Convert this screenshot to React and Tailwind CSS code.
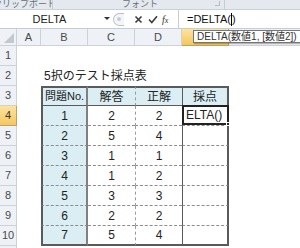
import React from 'react';

const FONT = { fontFamily: '"Liberation Sans", "Noto Sans CJK JP", sans-serif' };

// 表のデータ: [問題No, 解答, 正解]
const rows = [
  ['1', '2', '2'],
  ['2', '5', '4'],
  ['3', '1', '1'],
  ['4', '1', '2'],
  ['5', '3', '3'],
  ['6', '2', '2'],
  ['7', '5', '4'],
];

const RowHead = ({ n, active }) => (
  <div
    className={`w-[17px] shrink-0 flex items-center justify-center text-[11px] border-r border-b ${
      active
        ? 'bg-gradient-to-b from-[#fbe4a0] to-[#f6c65c] text-[#3a3a3a] border-[#c8a24a]'
        : 'bg-[#eef1f5] text-[#4a4a4a] border-[#cdd2d9]'
    }`}
  >
    {n}
  </div>
);

const App = () => {
  return (
    <div className="relative w-[300px] h-[248px] overflow-hidden bg-white text-[#222]" style={FONT}>
      {/* リボン下端 */}
      <div className="h-[10px] flex bg-[#e4e9ef] text-[9px] leading-[8px] text-[#6b6f75] overflow-hidden border-b border-[#c9d0d9]">
        <div className="w-[53px] shrink-0 flex items-start border-r border-[#c6ccd4] overflow-hidden">
          <span className="-ml-[7px] whitespace-nowrap">クリップボード</span>
          <span className="ml-[3px] mt-[1px] w-[5px] h-[5px] border-r border-b border-[#9aa0a8]" />
        </div>
        <div className="w-[172px] shrink-0 relative border-r border-[#c6ccd4]">
          <span className="absolute left-[69px] top-0 whitespace-nowrap">フォント</span>
          <span className="absolute right-[4px] top-[1px] w-[5px] h-[5px] border-r border-b border-[#b8bdc4]" />
        </div>
        <div className="flex-1" />
      </div>

      {/* 数式バー */}
      <div className="h-[19px] flex items-center bg-white border-b border-[#c5ccd6]">
        <div className="w-[113px] h-full shrink-0 relative flex items-center justify-center text-[11px] text-[#222]">
          <span className="-ml-[14px]">DELTA</span>
          <span className="absolute right-[3px] top-[7px] w-0 h-0 border-l-[3px] border-r-[3px] border-t-[3px] border-l-transparent border-r-transparent border-t-[#333]" />
        </div>
        <div className="w-[11px] h-[13px] shrink-0 rounded-l-full border border-r-0 border-[#b9c0c9] bg-[#f3f5f8] flex items-center justify-center">
          <span className="w-[4px] h-[4px] rounded-full bg-[#c7ccd3]" />
        </div>
        <div className="w-[54px] h-full shrink-0 flex items-center text-[#333]">
          <svg width="9" height="9" viewBox="0 0 9 9" className="ml-[10px]">
            <path d="M1.5 1.5 L7.5 7.5 M7.5 1.5 L1.5 7.5" stroke="#3c3c3c" strokeWidth="1.6" />
          </svg>
          <svg width="10" height="9" viewBox="0 0 10 9" className="ml-[5px]">
            <path d="M1 4.5 L3.8 7.5 L9 1.2" stroke="#3c3c3c" strokeWidth="1.6" fill="none" />
          </svg>
          <span className="ml-[4px] text-[10px] italic text-[#333]" style={{ fontFamily: '"Liberation Serif", serif' }}>
            f<span className="text-[8px]">x</span>
          </span>
        </div>
        <div className="flex-1 h-full border-l border-[#c5ccd6] flex items-center pl-[8px] text-[11px] text-[#111]">
          <span>=DELTA(</span>
          <span className="w-px h-[13px] bg-black" />
          <span>)</span>
        </div>
      </div>

      {/* 列見出し */}
      <div className="h-[17px] flex text-[11px] text-[#4a4a4a]">
        <div className="w-[17px] shrink-0 bg-[#eef1f5] border-r border-b border-[#cdd2d9] relative">
          <svg width="10" height="10" viewBox="0 0 10 10" className="absolute right-[2px] bottom-[2px]">
            <path d="M10 0 L10 10 L0 10 Z" fill="#c3c8cf" />
          </svg>
        </div>
        {['A', 'B', 'C', 'D'].map((c) => (
          <div
            key={c}
            className={`${c === 'A' ? 'w-[24px]' : 'w-[47px]'} shrink-0 bg-[#eef1f5] border-r border-b border-[#cdd2d9] flex items-center justify-center`}
          >
            {c}
          </div>
        ))}
        <div className="w-[47px] shrink-0 bg-gradient-to-b from-[#fbe4a0] to-[#f6c65c] border-r border-b border-[#c8a24a] flex items-center justify-center">
          E
        </div>
        <div className="flex-1 bg-[#eef1f5] border-b border-[#cdd2d9]" />
      </div>

      {/* 1行目 */}
      <div className="h-[20px] flex">
        <RowHead n="1" />
        <div className="flex-1" />
      </div>

      {/* 2行目: タイトル */}
      <div className="h-[20px] flex">
        <RowHead n="2" />
        <div className="w-[24px] shrink-0" />
        <div className="flex-1 flex items-center pl-[3px] text-[12px] text-[#222]">5択のテスト採点表</div>
      </div>

      {/* 3行目: 表の見出し */}
      <div className="h-[20px] flex text-[12px] text-[#222]">
        <RowHead n="3" />
        <div className="w-[24px] shrink-0" />
        <div className="w-[47px] shrink-0 bg-[#dbeef3] border-l-2 border-t-2 border-b border-r-2 border-[#5a5a5a] border-r-[#808080] flex items-center justify-center text-[11px]">
          問題No.
        </div>
        <div className="w-[47px] shrink-0 bg-[#dbeef3] border-t-2 border-b border-[#5a5a5a] flex items-center justify-center">
          解答
        </div>
        <div className="w-[47px] shrink-0 bg-[#dbeef3] border-t-2 border-b border-l border-[#5a5a5a] border-l-[#9a9a9a] [border-left-style:dashed] flex items-center justify-center">
          正解
        </div>
        <div className="w-[47px] shrink-0 bg-[#dbeef3] border-t-2 border-b border-l border-r-2 border-[#5a5a5a] flex items-center justify-center">
          採点
        </div>
        <div className="flex-1" />
      </div>

      {/* データ行 */}
      {rows.map((r, i) => {
        const last = i === rows.length - 1;
        const bottom = last
          ? 'border-b-2 border-b-[#5a5a5a]'
          : 'border-b border-b-[#8c8c8c] [border-bottom-style:dashed]';
        return (
          <div key={i} className="h-[20px] flex text-[12px] text-[#222]">
            <RowHead n={String(i + 4)} active={i === 0} />
            <div className="w-[24px] shrink-0" />
            <div className={`w-[47px] shrink-0 bg-[#dbeef3] border-l-2 border-l-[#5a5a5a] border-r-2 border-r-[#808080] ${bottom} flex items-center justify-center`}>
              {r[0]}
            </div>
            <div className={`w-[47px] shrink-0 ${bottom} flex items-center justify-center`}>{r[1]}</div>
            <div className={`w-[47px] shrink-0 border-l border-l-[#9a9a9a] [border-left-style:dashed] ${bottom} flex items-center justify-center`}>
              {r[2]}
            </div>
            <div className={`w-[47px] shrink-0 relative border-l border-l-[#5a5a5a] border-r-2 border-r-[#5a5a5a] ${bottom}`}>
              {i === 0 && (
                <div className="absolute -left-px -top-px -right-[2px] bottom-0 border-2 border-[#222] flex items-center pl-[2px] text-[12px]">
                  ELTA()
                  <span className="absolute -right-[3px] -bottom-[3px] w-[4px] h-[4px] bg-[#222] border border-white" />
                </div>
              )}
            </div>
            <div className="flex-1" />
          </div>
        );
      })}

      {/* 11行目 */}
      <div className="h-[20px] flex">
        <RowHead n="11" />
        <div className="flex-1" />
      </div>

      {/* 関数ヒント */}
      <div className="absolute left-[193px] top-[30px] h-[13px] px-[3px] bg-white border border-[#767676] text-[10px] leading-[11px] text-[#333] whitespace-nowrap flex items-center shadow-[1px_1px_1px_rgba(0,0,0,0.25)]">
        DELTA(数値1, [数値2])
      </div>
    </div>
  );
};

export default App;
